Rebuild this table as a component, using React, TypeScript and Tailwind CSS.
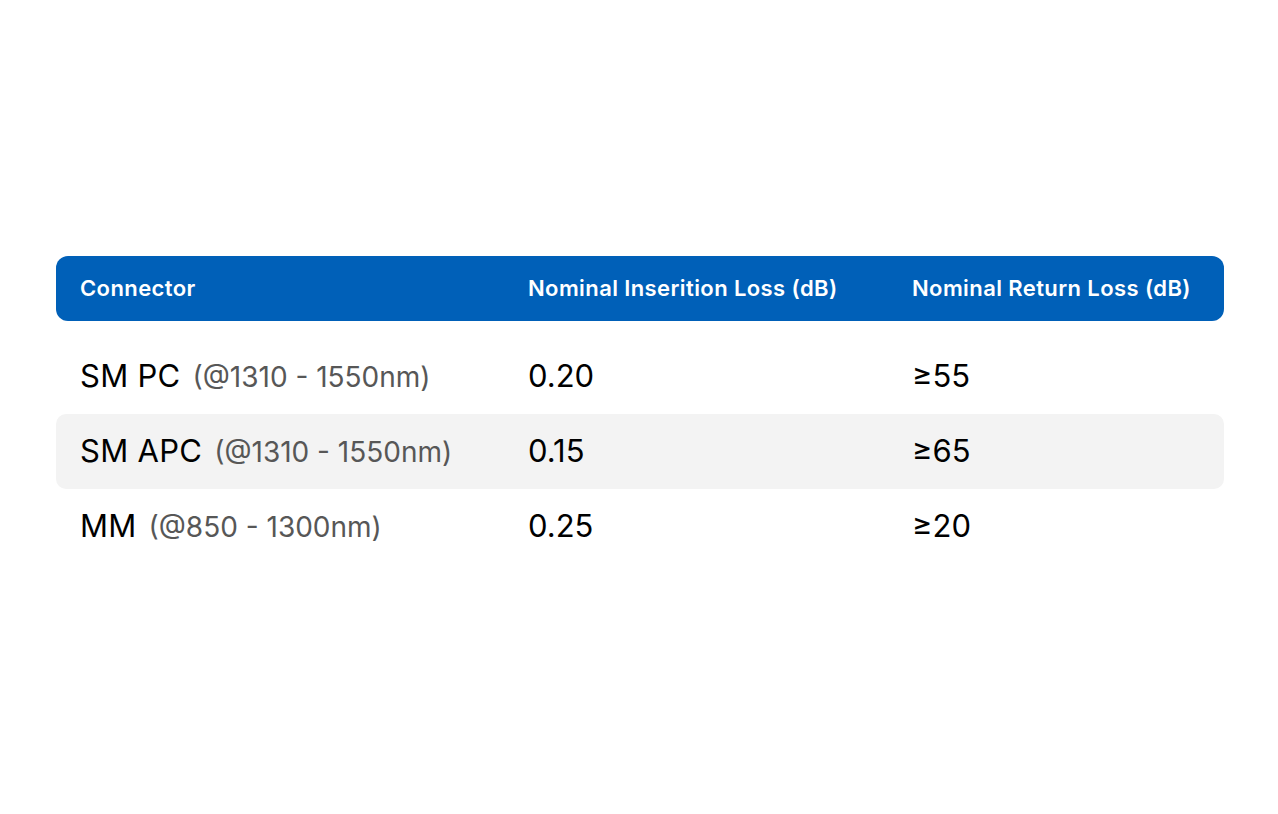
import React from "react";

const rows = [
  { name: "SM PC", range: "(@1310 - 1550nm)", il: "0.20", rl: "≥55", shaded: false },
  { name: "SM APC", range: "(@1310 - 1550nm)", il: "0.15", rl: "≥65", shaded: true },
  { name: "MM", range: "(@850 - 1300nm)", il: "0.25", rl: "≥20", shaded: false },
];

export default function App() {
  return (
    <div className="w-[1278px] h-[814px] bg-white pt-[256px] pl-[56px] pr-[54px]" style={{ fontFamily: "Inter, 'Liberation Sans', sans-serif" }}>
      <div className="grid grid-cols-[448px_384px_1fr] h-[65px] items-center rounded-[12px] bg-[#0060b8] text-white text-[22px] font-semibold tracking-[0.4px]">
        <div className="pl-6">Connector</div>
        <div className="pl-6">Nominal Inserition Loss (dB)</div>
        <div className="pl-6">Nominal Return Loss (dB)</div>
      </div>
      <div className="mt-[18px] flex flex-col">
        {rows.map((r) => (
          <div
            key={r.name}
            className={`grid grid-cols-[448px_384px_1fr] h-[75px] items-center rounded-[10px] ${r.shaded ? "bg-[#f3f3f3]" : ""}`}
          >
            <div className="pl-6 flex items-baseline gap-[12px]">
              <span className="text-[31px] text-black tracking-[0.3px]">{r.name}</span>
              <span className="text-[28px] text-[#575757]">{r.range}</span>
            </div>
            <div className="pl-6 text-[31px] text-black">{r.il}</div>
            <div className="pl-6 text-[31px] text-black">{r.rl}</div>
          </div>
        ))}
      </div>
    </div>
  );
}
